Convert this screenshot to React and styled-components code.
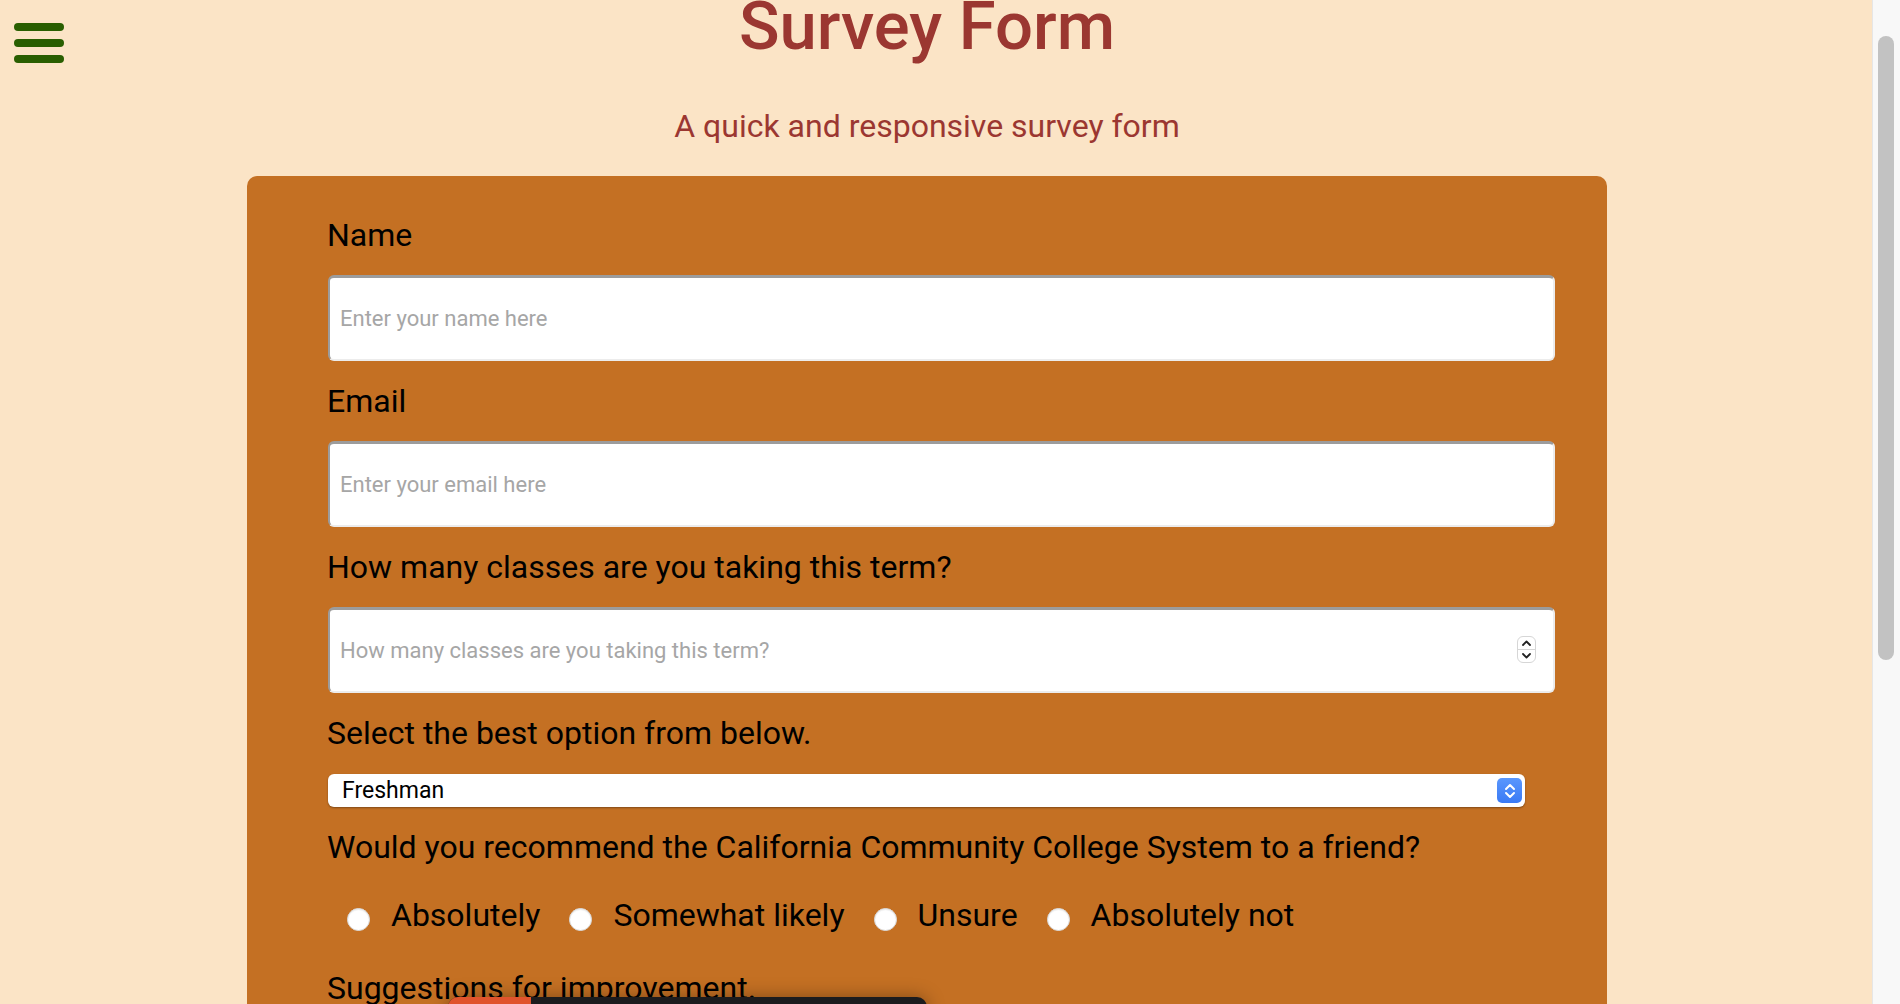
import styled, { createGlobalStyle } from "styled-components";

const GlobalStyle = createGlobalStyle`
    html, body {
        margin: 0;
        padding: 0;
        height: 100%;
        overflow: hidden;
        background: #fbe4c6;
        font-family: Roboto, "Noto Sans", sans-serif;
    }
    * {
        box-sizing: border-box;
    }
`

const Screen = styled.div`
    display: flex;
    height: 100vh;
    background: #fbe4c6;
`

const Page = styled.main`
    flex: 1;
    padding-right: 18px;
    display: flex;
    flex-direction: column;
    align-items: center;
    overflow: hidden;
`

const MenuButton = styled.button`
    position: fixed;
    top: 23px;
    left: 14px;
    display: flex;
    flex-direction: column;
    gap: 8px;
    padding: 0;
    border: none;
    background: none;
    & > span {
        width: 50px;
        height: 8px;
        border-radius: 4px;
        background: #295e00;
    }
`

const Title = styled.h1`
    margin: 0;
    font-size: 67px;
    font-weight: 500;
    line-height: 52px;
    color: #9b3731;
`

const Subtitle = styled.p`
    margin: 55px 0 31px;
    font-size: 32px;
    font-weight: 400;
    color: #9b3731;
`

const Card = styled.form`
    width: 1360px;
    flex-shrink: 0;
    background: #c47023;
    border-radius: 10px;
    padding: 40px 52px 80px 81px;
    display: flex;
    flex-direction: column;
    gap: 21px;
`

const Label = styled.label`
    margin: 0 0 0 -1px;
    font-size: 32px;
    color: #000;
`

const Field = styled.div`
    position: relative;
`

const TextInput = styled.input`
    width: 100%;
    height: 86px;
    padding: 0 10px;
    font-family: Roboto, sans-serif;
    font-size: 22px;
    background: #fff;
    border-style: solid;
    border-width: 3px 2px 2px 2px;
    border-color: #9c9c9c #ececec #ececec #9c9c9c;
    border-radius: 6px;
    outline: none;
    &::placeholder {
        color: #a6a6a6;
    }
    &::-webkit-inner-spin-button,
    &::-webkit-outer-spin-button {
        -webkit-appearance: none;
        margin: 0;
    }
`

const Spinner = styled.div`
    position: absolute;
    right: 19px;
    top: 29px;
    width: 19px;
    height: 27px;
    border: 1px solid #d6d6d6;
    border-radius: 6px;
    background: #fff;
    display: flex;
    flex-direction: column;
    & > svg {
        flex: 1;
        width: 100%;
    }
    & > svg + svg {
        border-top: 1px solid #d6d6d6;
    }
`

const SelectWrap = styled.div`
    position: relative;
    width: calc(100% - 30px);
    margin-top: 1px;
`

const Select = styled.select`
    width: 100%;
    height: 33px;
    padding: 0 14px;
    appearance: none;
    -webkit-appearance: none;
    font-family: Roboto, sans-serif;
    font-size: 23px;
    color: #000;
    background: #fff;
    border: none;
    border-radius: 6px;
    box-shadow: 0 1px 2px rgba(0, 0, 0, 0.35);
    outline: none;
`

const SelectButton = styled.span`
    position: absolute;
    right: 3px;
    top: 4px;
    width: 25px;
    height: 25px;
    border-radius: 5px;
    background: linear-gradient(#5a97fd, #3a7af5);
    pointer-events: none;
    display: flex;
    align-items: center;
    justify-content: center;
`

const RadioGroup = styled.div`
    display: flex;
    align-items: center;
    gap: 29px;
    padding: 9px 0 14px 19px;
`

const RadioOption = styled.label`
    display: flex;
    align-items: center;
    gap: 21px;
    font-size: 32px;
    color: #000;
`

const Radio = styled.input`
    appearance: none;
    -webkit-appearance: none;
    margin: 8px 0 0;
    width: 23px;
    height: 23px;
    border-radius: 50%;
    background: #fff;
    border: 1px solid #d9d9d9;
    box-shadow: inset 0 1px 1px rgba(0, 0, 0, 0.08);
`

const ScrollTrack = styled.div`
    width: 28px;
    flex-shrink: 0;
    background: #f8f8f8;
    border-left: 1px solid #e6e6e6;
    padding: 36px 6px 0 5px;
    & > div {
        height: 624px;
        border-radius: 8px;
        background: #c2c2c2;
    }
`

const RecordBar = styled.div`
    position: fixed;
    left: 448px;
    top: 997px;
    width: 479px;
    height: 30px;
    border-radius: 10px;
    background: #1c1c1e;
    overflow: hidden;
    box-shadow: 0 0 18px rgba(0, 0, 0, 0.35);
    & > span {
        display: block;
        width: 83px;
        height: 100%;
        background: #e0532c;
    }
`

const options = ["Absolutely", "Somewhat likely", "Unsure", "Absolutely not"]

export default function App() {
    return (
        <>
            <GlobalStyle />
            <Screen>
                <Page>
                    <MenuButton type="button" aria-label="menu">
                        <span />
                        <span />
                        <span />
                    </MenuButton>
                    <Title>Survey Form</Title>
                    <Subtitle>A quick and responsive survey form</Subtitle>
                    <Card>
                        <Label htmlFor="name">Name</Label>
                        <TextInput id="name" type="text" placeholder="Enter your name here" />
                        <Label htmlFor="email">Email</Label>
                        <TextInput id="email" type="email" placeholder="Enter your email here" />
                        <Label htmlFor="classes">How many classes are you taking this term?</Label>
                        <Field>
                            <TextInput id="classes" type="number" placeholder="How many classes are you taking this term?" />
                            <Spinner>
                                <svg viewBox="0 0 17 12">
                                    <path d="M5 8l3.5-3.5L12 8" fill="none" stroke="#222" strokeWidth="1.8" strokeLinecap="round" strokeLinejoin="round" />
                                </svg>
                                <svg viewBox="0 0 17 12">
                                    <path d="M5 4l3.5 3.5L12 4" fill="none" stroke="#222" strokeWidth="1.8" strokeLinecap="round" strokeLinejoin="round" />
                                </svg>
                            </Spinner>
                        </Field>
                        <Label htmlFor="year">Select the best option from below.</Label>
                        <SelectWrap>
                            <Select id="year" defaultValue="freshman">
                                <option value="freshman">Freshman</option>
                                <option value="sophomore">Sophomore</option>
                                <option value="junior">Junior</option>
                                <option value="senior">Senior</option>
                            </Select>
                            <SelectButton>
                                <svg width="14" height="18" viewBox="0 0 14 18">
                                    <path d="M3 7l4-4 4 4M3 11l4 4 4-4" fill="none" stroke="#fff" strokeWidth="2" strokeLinecap="round" strokeLinejoin="round" />
                                </svg>
                            </SelectButton>
                        </SelectWrap>
                        <Label as="p">Would you recommend the California Community College System to a friend?</Label>
                        <RadioGroup>
                            {options.map((o) => (
                                <RadioOption key={o}>
                                    <Radio type="radio" name="recommend" value={o} />
                                    {o}
                                </RadioOption>
                            ))}
                        </RadioGroup>
                        <Label htmlFor="suggest">Suggestions for improvement.</Label>
                    </Card>
                </Page>
                <ScrollTrack>
                    <div />
                </ScrollTrack>
            </Screen>
            <RecordBar>
                <span />
            </RecordBar>
        </>
    )
}
